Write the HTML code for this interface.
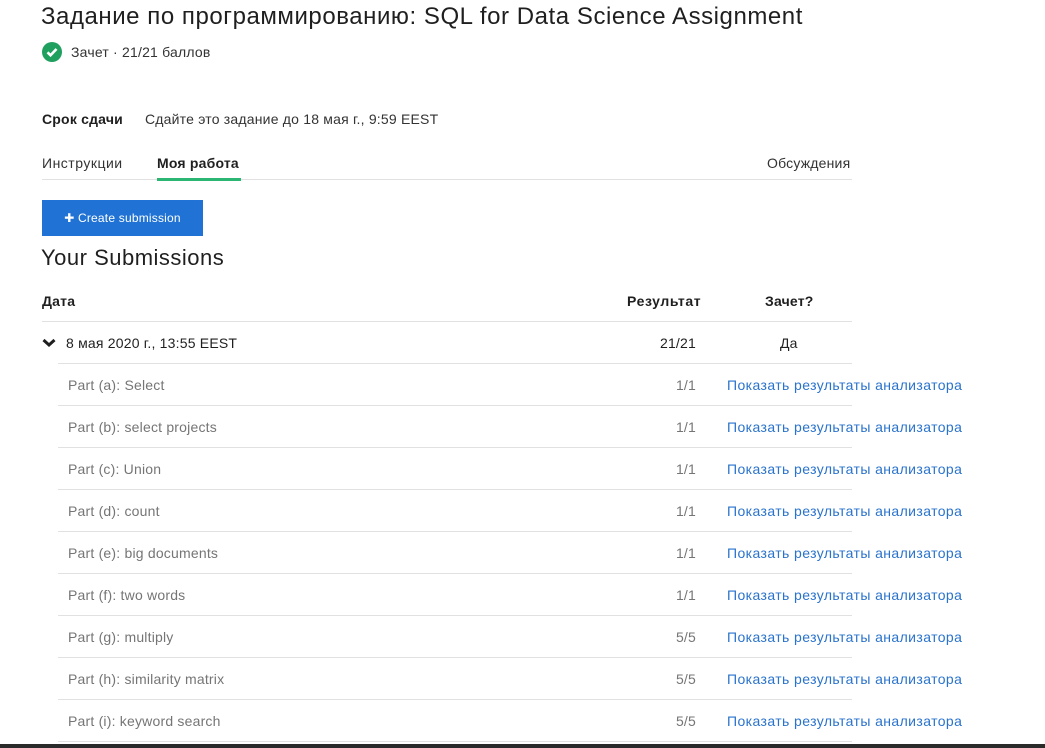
<!DOCTYPE html>
<html><head><meta charset="utf-8"><style>
body{margin:0;width:1045px;height:748px;background:#fff;font-family:"Liberation Sans",sans-serif;color:#1f1f1f;position:relative;overflow:hidden;letter-spacing:0.2px}
.a{position:absolute;white-space:nowrap}
.line{position:absolute;height:1px;background:#e1e1e1}
.part{color:#757575;font-size:14px}
.sc{color:#757575;font-size:14px;text-align:right;width:60px}
.lk{color:#2a73cc;font-size:14px;letter-spacing:0.4px}
</style></head><body>
<div class="a" style="left:41px;top:3px;font-size:24px;color:#1f1f1f;letter-spacing:0.55px">Задание по программированию: SQL for Data Science Assignment</div>
<svg class="a" style="left:42px;top:42px" width="20" height="20" viewBox="0 0 20 20"><circle cx="10" cy="10" r="10" fill="#1fa05e"/><path d="M5.5 10.3l3 3 6-6.3" stroke="#fff" stroke-width="2.6" fill="none"/></svg>
<div class="a" style="left:71px;top:44px;font-size:14px;color:#333">Зачет · 21/21 баллов</div>
<div class="a" style="left:42px;top:111px;font-size:14px;font-weight:bold">Срок сдачи</div>
<div class="a" style="left:145px;top:111px;font-size:14px;color:#333">Сдайте это задание до 18 мая г., 9:59 EEST</div>
<div class="a" style="left:42px;top:155px;font-size:14px;color:#333;letter-spacing:0.5px">Инструкции</div>
<div class="a" style="left:157px;top:155px;font-size:14px;font-weight:bold">Моя работа</div>
<div class="a" style="left:767px;top:155px;font-size:14px;color:#333">Обсуждения</div>
<div class="line" style="left:42px;top:179px;width:810px"></div>
<div class="a" style="left:157px;top:178px;width:84px;height:3px;background:#2bb673"></div>
<div class="a" style="left:42px;top:200px;width:161px;height:36px;background:#2073d4;color:#fff;font-size:12px;line-height:36px;text-align:center">✚ Create submission</div>
<div class="a" style="left:41px;top:245px;font-size:22px;color:#1f1f1f;letter-spacing:0.5px">Your Submissions</div>
<div class="a" style="left:42px;top:293px;font-size:14px;font-weight:bold">Дата</div>
<div class="a" style="left:627px;top:293px;font-size:14px;font-weight:bold;letter-spacing:0.6px">Результат</div>
<div class="a" style="left:765px;top:293px;font-size:14px;font-weight:bold">Зачет?</div>
<div class="line" style="left:42px;top:321px;width:810px"></div>
<svg class="a" style="left:42px;top:338px" width="14" height="10" viewBox="0 0 14 10"><path d="M1.5 2l5.5 5 5.5-5" stroke="#1f1f1f" stroke-width="3" fill="none"/></svg>
<div class="a" style="left:66px;top:335px;font-size:14px">8 мая 2020 г., 13:55 EEST</div>
<div class="a" style="left:636px;top:335px;font-size:14px;width:60px;text-align:right">21/21</div>
<div class="a" style="left:780px;top:335px;font-size:14px">Да</div>
<div class="line" style="left:58px;top:363px;width:794px"></div>
<div id="rows"></div>
<div class="a" style="left:0;top:744px;width:1045px;height:4px;background:#2a2a2a"></div>
<script>
var p=[["Part (a): Select","1/1"],["Part (b): select projects","1/1"],["Part (c): Union","1/1"],["Part (d): count","1/1"],["Part (e): big documents","1/1"],["Part (f): two words","1/1"],["Part (g): multiply","5/5"],["Part (h): similarity matrix","5/5"],["Part (i): keyword search","5/5"]];
var h="";p.forEach(function(r,i){var y=363+i*42;
h+='<div class="a part" style="left:68px;top:'+(y+14)+'px">'+r[0]+'</div><div class="a sc" style="left:636px;top:'+(y+14)+'px">'+r[1]+'</div><div class="a lk" style="left:727px;top:'+(y+14)+'px">Показать результаты анализатора</div><div class="line" style="left:58px;top:'+(y+42)+'px;width:794px"></div>';});
document.getElementById("rows").innerHTML=h;
</script>
</body></html>
